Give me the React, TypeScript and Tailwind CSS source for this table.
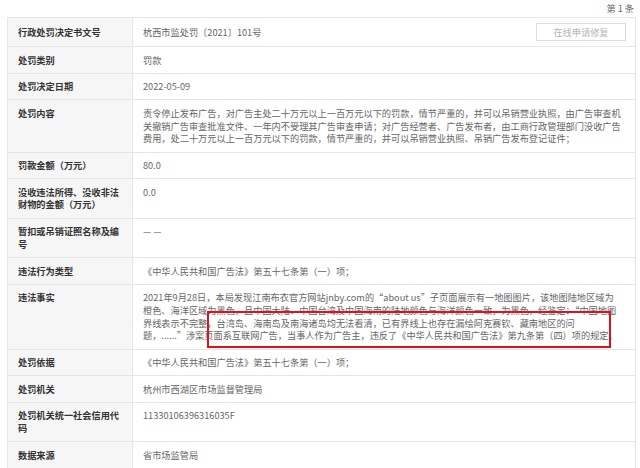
const rows: { label: string[]; value: string[]; boxed?: boolean }[] = [
  { label: ['处罚类别'], value: ['罚款'] },
  { label: ['处罚决定日期'], value: ['2022-05-09'] },
  {
    label: ['处罚内容'],
    value: [
      '责令停止发布广告，对广告主处二十万元以上一百万元以下的罚款，情节严重的，并可以吊销营业执照，由广告审查机',
      '关撤销广告审查批准文件、一年内不受理其广告审查申请；对广告经营者、广告发布者，由工商行政管理部门没收广告',
      '费用，处二十万元以上一百万元以下的罚款，情节严重的，并可以吊销营业执照、吊销广告发布登记证件；',
    ],
  },
  { label: ['罚款金额（万元）'], value: ['80.0'] },
  { label: ['没收违法所得、没收非法', '财物的金额（万元）'], value: ['0.0'] },
  { label: ['暂扣或吊销证照名称及编', '号'], value: ['— —'] },
  { label: ['违法行为类型'], value: ['《中华人民共和国广告法》第五十七条第（一）项；'] },
  {
    label: ['违法事实'],
    boxed: true,
    value: [
      '2021年9月28日，本局发现江南布衣官方网站jnby.com的“about us”子页面展示有一地图图片，该地图陆地区域为',
      '橙色、海洋区域为黑色，且中国大陆、中国台湾及中国海南的陆地颜色与海洋颜色一致，为黑色，经鉴定：“中国地图',
      '界线表示不完整，台湾岛、海南岛及南海诸岛均无法看清，已有界线上也存在漏绘阿克赛钦、藏南地区的问',
      '题，......”涉案页面系互联网广告，当事人作为广告主，违反了《中华人民共和国广告法》第九条第（四）项的规定。',
    ],
  },
  { label: ['处罚依据'], value: ['《中华人民共和国广告法》第五十七条第（一）项；'] },
  { label: ['处罚机关'], value: ['杭州市西湖区市场监督管理局'] },
  { label: ['处罚机关统一社会信用代', '码'], value: ['11330106396316035F'] },
  { label: ['数据来源'], value: ['省市场监管局'] },
]

const Lines = ({ lines }: { lines: string[] }) => (
  <>
    {lines.map((l, i) => (
      <div key={i} className="whitespace-nowrap">
        {l}
      </div>
    ))}
  </>
)

export default function App() {
  return (
    <div
      className="w-[640px] h-[468px] overflow-hidden bg-white text-[9.2px] leading-[12.7px]"
      style={{ fontFamily: '"Noto Sans CJK SC", "Noto Sans", sans-serif' }}
    >
      <div className="h-[17px] flex items-center justify-end pr-[6px] text-[#666]">第 1 条</div>

      <div className="ml-[7px] w-[629px] border-t border-l border-r border-[#e6e6e6]">
        {/* first row has the button */}
        <div className="grid grid-cols-[125px_1fr] border-b border-[#e6e6e6]">
          <div className="bg-[#f6f6f6] border-r border-[#e6e6e6] pl-[10px] flex items-center font-bold text-[#333]">
            行政处罚决定书文号
          </div>
          <div className="flex items-center justify-between pl-[10px] pr-[9px] py-[5px] text-[#666]">
            <span>杭西市监处罚〔2021〕101号</span>
            <button className="h-[18px] w-[90px] border border-[#dcdcdc] bg-white text-[#b5b5b5]">
              在线申请修复
            </button>
          </div>
        </div>

        {rows.map((r, i) => (
          <div key={i} className="grid grid-cols-[125px_1fr] border-b border-[#e6e6e6]">
            <div className="bg-[#f6f6f6] border-r border-[#e6e6e6] pl-[10px] pr-[8px] py-[6.5px] font-bold text-[#333]">
              <Lines lines={r.label} />
            </div>
            <div className="relative pl-[10px] py-[6.5px] text-[#666]">
              <Lines lines={r.value} />
              {r.boxed && (
                <div className="absolute left-[74px] top-[26px] w-[404px] h-[37px] border-2 border-[#e0101c] pointer-events-none" />
              )}
            </div>
          </div>
        ))}
      </div>
    </div>
  )
}
